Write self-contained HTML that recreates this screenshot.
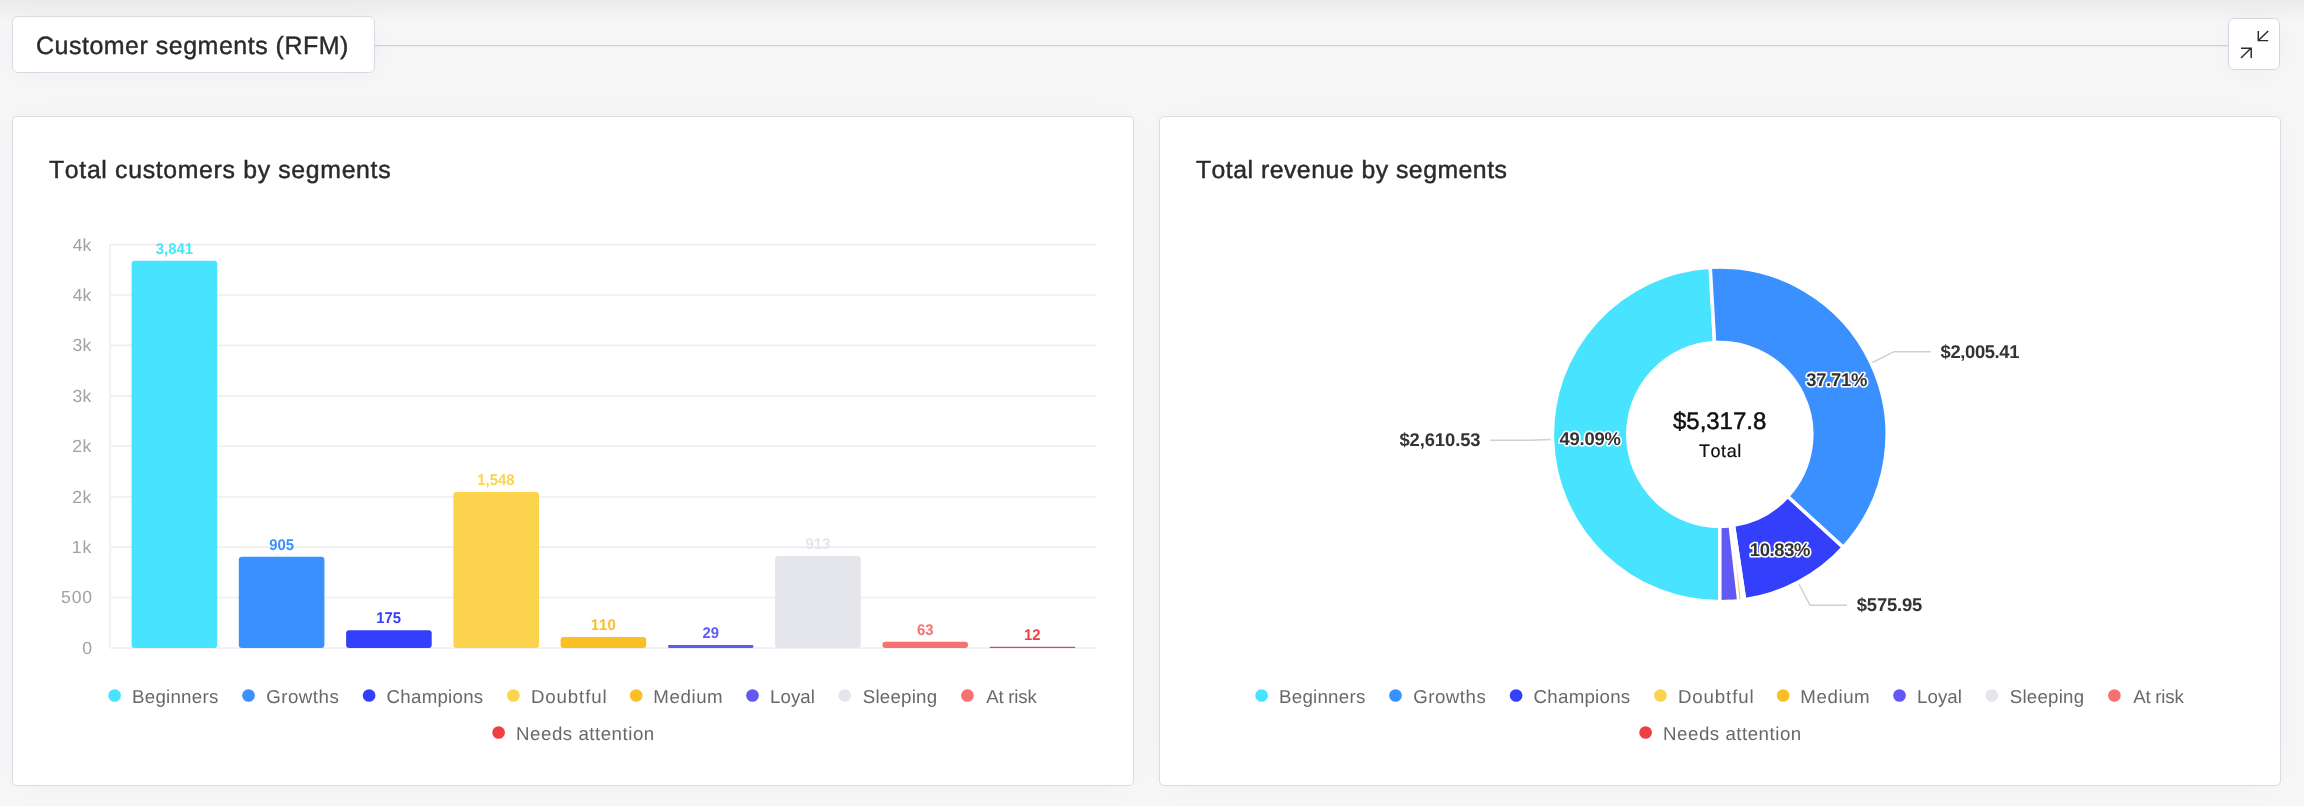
<!DOCTYPE html>
<html><head><meta charset="utf-8"><title>Customer segments (RFM)</title>
<style>
html,body{margin:0;padding:0;}
body{width:2304px;height:806px;overflow:hidden;position:relative;background:#f7f7f8;font-family:"Liberation Sans", sans-serif;}
#w{position:absolute;left:0;top:0;width:2304px;height:806px;will-change:transform;}
.topshade{position:absolute;left:0;top:0;width:2304px;height:22px;background:linear-gradient(#ebebec,#f0f0f1 45%,#f7f7f8);}
.abs{position:absolute;}
.box{position:absolute;background:#fff;border:1px solid #dadae3;border-radius:6px;box-sizing:border-box;box-shadow:0 2px 30px rgba(40,40,90,0.04);}
.card{position:absolute;background:#fff;border:1px solid #dadae3;border-radius:5px;box-sizing:border-box;box-shadow:0 0 40px rgba(40,40,90,0.03);}
svg{position:absolute;left:0;top:0;overflow:visible;}
text{font-family:"Liberation Sans", sans-serif;font-kerning:none;white-space:pre;text-rendering:geometricPrecision;}
</style></head><body>
<div class="topshade"></div>
<div id="w">
<div class="abs" style="left:375px;top:45px;width:1855px;height:1px;background:#d3d3de;"></div>
<div class="abs" style="left:375px;top:46px;width:1855px;height:1px;background:#e8e8ee;"></div>
<div class="box" style="left:12px;top:16px;width:363px;height:56.5px;"></div>
<div class="box" style="left:2228px;top:18.4px;width:52.2px;height:51.7px;border-color:#d6d6e0;"></div>
<div class="card" style="left:12px;top:116px;width:1122px;height:669.5px;"></div>
<div class="card" style="left:1159px;top:116px;width:1121.5px;height:669.5px;"></div>
<svg width="2304" height="806" viewBox="0 0 2304 806">
<g fill="none" stroke="#2a2a2a" stroke-width="1.45" stroke-linecap="butt" stroke-linejoin="miter">
<path d="M2268.2 30.9 L2258.3 40.6 M2258.3 30.9 V40.6 H2268.2"/>
<path d="M2241 57.9 L2251.1 48.1 M2241 48.2 H2251.2 V57.9"/>
</g>
<text x="36.03" y="54.20" font-size="25" font-weight="400" fill="#2a2a2a" letter-spacing="0.495" stroke="#2a2a2a" stroke-width="0.4">Customer segments (RFM)</text>
<text x="49.04" y="177.70" font-size="24.8" font-weight="400" fill="#2a2a2a" letter-spacing="0.679" stroke="#2a2a2a" stroke-width="0.45">Total customers by segments</text>
<text x="1195.94" y="177.70" font-size="24.8" font-weight="400" fill="#2a2a2a" letter-spacing="0.496" stroke="#2a2a2a" stroke-width="0.45">Total revenue by segments</text>
<circle cx="114.6" cy="695.5" r="6.35" fill="#47E3FF"/>
<text x="132.07" y="702.80" font-size="18.7" font-weight="400" fill="#686868" letter-spacing="0.251">Beginners</text>
<circle cx="248.5" cy="695.5" r="6.35" fill="#3A90FF"/>
<text x="266.16" y="702.80" font-size="18.7" font-weight="400" fill="#686868" letter-spacing="0.499">Growths</text>
<circle cx="369.1" cy="695.5" r="6.35" fill="#333FFA"/>
<text x="386.55" y="702.80" font-size="18.7" font-weight="400" fill="#686868" letter-spacing="0.267">Champions</text>
<circle cx="513.4" cy="695.5" r="6.35" fill="#FCD34D"/>
<text x="530.97" y="702.80" font-size="18.7" font-weight="400" fill="#686868" letter-spacing="0.862">Doubtful</text>
<circle cx="636.2" cy="695.5" r="6.35" fill="#FBBF24"/>
<text x="653.37" y="702.80" font-size="18.7" font-weight="400" fill="#686868" letter-spacing="0.571">Medium</text>
<circle cx="752.5" cy="695.5" r="6.35" fill="#6259F5"/>
<text x="770.07" y="702.80" font-size="18.7" font-weight="400" fill="#686868" letter-spacing="0.045">Loyal</text>
<circle cx="844.8" cy="695.5" r="6.35" fill="#E5E6EB"/>
<text x="862.75" y="702.80" font-size="18.7" font-weight="400" fill="#686868" letter-spacing="0.225">Sleeping</text>
<circle cx="967.4" cy="695.5" r="6.35" fill="#F87171"/>
<text x="986.16" y="702.80" font-size="18.7" font-weight="400" fill="#686868" letter-spacing="-0.223">At risk</text>
<circle cx="498.6" cy="732.5" r="6.35" fill="#EE4043"/>
<text x="516.07" y="739.70" font-size="18.7" font-weight="400" fill="#686868" letter-spacing="0.518">Needs attention</text>
<circle cx="1261.6" cy="695.5" r="6.35" fill="#47E3FF"/>
<text x="1279.07" y="702.80" font-size="18.7" font-weight="400" fill="#686868" letter-spacing="0.251">Beginners</text>
<circle cx="1395.5" cy="695.5" r="6.35" fill="#3A90FF"/>
<text x="1413.16" y="702.80" font-size="18.7" font-weight="400" fill="#686868" letter-spacing="0.499">Growths</text>
<circle cx="1516.1" cy="695.5" r="6.35" fill="#333FFA"/>
<text x="1533.55" y="702.80" font-size="18.7" font-weight="400" fill="#686868" letter-spacing="0.267">Champions</text>
<circle cx="1660.4" cy="695.5" r="6.35" fill="#FCD34D"/>
<text x="1677.97" y="702.80" font-size="18.7" font-weight="400" fill="#686868" letter-spacing="0.862">Doubtful</text>
<circle cx="1783.2" cy="695.5" r="6.35" fill="#FBBF24"/>
<text x="1800.37" y="702.80" font-size="18.7" font-weight="400" fill="#686868" letter-spacing="0.571">Medium</text>
<circle cx="1899.5" cy="695.5" r="6.35" fill="#6259F5"/>
<text x="1917.07" y="702.80" font-size="18.7" font-weight="400" fill="#686868" letter-spacing="0.045">Loyal</text>
<circle cx="1991.8" cy="695.5" r="6.35" fill="#E5E6EB"/>
<text x="2009.75" y="702.80" font-size="18.7" font-weight="400" fill="#686868" letter-spacing="0.225">Sleeping</text>
<circle cx="2114.4" cy="695.5" r="6.35" fill="#F87171"/>
<text x="2133.16" y="702.80" font-size="18.7" font-weight="400" fill="#686868" letter-spacing="-0.223">At risk</text>
<circle cx="1645.6" cy="732.5" r="6.35" fill="#EE4043"/>
<text x="1663.07" y="739.70" font-size="18.7" font-weight="400" fill="#686868" letter-spacing="0.518">Needs attention</text>
<line x1="110" x2="1096.5" y1="244.6" y2="244.6" stroke="#eeeef3" stroke-width="1.6"/>
<line x1="110" x2="1096.5" y1="295.0" y2="295.0" stroke="#eeeef3" stroke-width="1.6"/>
<line x1="110" x2="1096.5" y1="345.4" y2="345.4" stroke="#eeeef3" stroke-width="1.6"/>
<line x1="110" x2="1096.5" y1="395.9" y2="395.9" stroke="#eeeef3" stroke-width="1.6"/>
<line x1="110" x2="1096.5" y1="446.3" y2="446.3" stroke="#eeeef3" stroke-width="1.6"/>
<line x1="110" x2="1096.5" y1="496.7" y2="496.7" stroke="#eeeef3" stroke-width="1.6"/>
<line x1="110" x2="1096.5" y1="547.1" y2="547.1" stroke="#eeeef3" stroke-width="1.6"/>
<line x1="110" x2="1096.5" y1="597.5" y2="597.5" stroke="#eeeef3" stroke-width="1.6"/>
<line x1="110" x2="1096.5" y1="648.0" y2="648.0" stroke="#eeeef3" stroke-width="1.6"/>
<line x1="110" x2="110" y1="244.6" y2="648" stroke="#eeeef3" stroke-width="1.6"/>
<text x="72.80" y="250.55" font-size="17.6" font-weight="400" fill="#a2a2a2" letter-spacing="-0.010">4k</text>
<text x="72.80" y="300.97" font-size="17.6" font-weight="400" fill="#a2a2a2" letter-spacing="-0.010">4k</text>
<text x="72.53" y="351.39" font-size="17.6" font-weight="400" fill="#a2a2a2" letter-spacing="0.256">3k</text>
<text x="72.53" y="401.81" font-size="17.6" font-weight="400" fill="#a2a2a2" letter-spacing="0.256">3k</text>
<text x="72.31" y="452.23" font-size="17.6" font-weight="400" fill="#a2a2a2" letter-spacing="0.471">2k</text>
<text x="72.31" y="502.65" font-size="17.6" font-weight="400" fill="#a2a2a2" letter-spacing="0.471">2k</text>
<text x="71.86" y="553.07" font-size="17.6" font-weight="400" fill="#a2a2a2" letter-spacing="0.927">1k</text>
<text x="61.10" y="603.49" font-size="17.6" font-weight="400" fill="#a2a2a2" letter-spacing="0.814">500</text>
<text x="82.30" y="653.91" font-size="17.6" font-weight="400" fill="#a2a2a2">0</text>
<rect x="131.6" y="260.67" width="85.6" height="387.33" rx="3.00" fill="#47E3FF"/>
<g transform="translate(174.40 253.77) scale(0.961 1)"><text x="-19.36" y="0.00" font-size="15.5" font-weight="700" fill="#47E3FF">3,841</text></g>
<rect x="238.8" y="556.74" width="85.6" height="91.26" rx="3.00" fill="#3A90FF"/>
<g transform="translate(281.65 549.84) scale(0.961 1)"><text x="-12.98" y="0.00" font-size="15.5" font-weight="700" fill="#3A90FF">905</text></g>
<rect x="346.1" y="630.35" width="85.6" height="17.65" rx="3.00" fill="#333FFA"/>
<g transform="translate(388.90 623.45) scale(0.961 1)"><text x="-13.20" y="0.00" font-size="15.5" font-weight="700" fill="#333FFA">175</text></g>
<rect x="453.4" y="491.90" width="85.6" height="156.10" rx="3.00" fill="#FCD34D"/>
<g transform="translate(496.15 485.00) scale(0.961 1)"><text x="-19.64" y="0.00" font-size="15.5" font-weight="700" fill="#FCD34D">1,548</text></g>
<rect x="560.6" y="636.91" width="85.6" height="11.09" rx="3.00" fill="#FBBF24"/>
<g transform="translate(603.40 630.01) scale(0.961 1)"><text x="-13.10" y="0.00" font-size="15.5" font-weight="700" fill="#FBBF24">110</text></g>
<rect x="667.9" y="645.08" width="85.6" height="2.92" rx="1.46" fill="#6259F5"/>
<g transform="translate(710.65 638.18) scale(0.961 1)"><text x="-8.60" y="0.00" font-size="15.5" font-weight="700" fill="#6259F5">29</text></g>
<rect x="775.1" y="555.93" width="85.6" height="92.07" rx="3.00" fill="#E5E6EB"/>
<g transform="translate(817.90 549.03) scale(0.961 1)"><text x="-12.92" y="0.00" font-size="15.5" font-weight="700" fill="#E5E6EB">913</text></g>
<rect x="882.4" y="641.65" width="85.6" height="6.35" rx="3.00" fill="#F87171"/>
<g transform="translate(925.15 634.75) scale(0.961 1)"><text x="-8.62" y="0.00" font-size="15.5" font-weight="700" fill="#F87171">63</text></g>
<rect x="989.6" y="646.79" width="85.6" height="1.21" rx="0.61" fill="#EE4043"/>
<g transform="translate(1032.40 639.89) scale(0.961 1)"><text x="-8.80" y="0.00" font-size="15.5" font-weight="700" fill="#EE4043">12</text></g>
<path d="M1719.80 601.70 A167.3 167.3 0 0 1 1710.23 267.37 L1714.54 342.55 A92.0 92.0 0 0 0 1719.80 526.40 Z" fill="#47E3FF" stroke="#fff" stroke-width="3.5" stroke-linejoin="round"/>
<path d="M1710.23 267.37 A167.3 167.3 0 0 1 1843.19 547.38 L1787.65 496.53 A92.0 92.0 0 0 0 1714.54 342.55 Z" fill="#3A90FF" stroke="#fff" stroke-width="3.5" stroke-linejoin="round"/>
<path d="M1843.19 547.38 A167.3 167.3 0 0 1 1744.62 599.85 L1733.45 525.38 A92.0 92.0 0 0 0 1787.65 496.53 Z" fill="#333FFA" stroke="#fff" stroke-width="3.5" stroke-linejoin="round"/>
<path d="M1744.62 599.85 A167.3 167.3 0 0 1 1741.64 600.27 L1731.81 525.61 A92.0 92.0 0 0 0 1733.45 525.38 Z" fill="#FCD34D" stroke="#fff" stroke-width="3.5" stroke-linejoin="round"/>
<path d="M1741.64 600.27 A167.3 167.3 0 0 1 1738.74 600.62 L1730.21 525.81 A92.0 92.0 0 0 0 1731.81 525.61 Z" fill="#FBBF24" stroke="#fff" stroke-width="3.5" stroke-linejoin="round"/>
<path d="M1738.74 600.62 A167.3 167.3 0 0 1 1719.80 601.70 L1719.80 526.40 A92.0 92.0 0 0 0 1730.21 525.81 Z" fill="#6259F5" stroke="#fff" stroke-width="3.5" stroke-linejoin="round"/>
<polygon points="1735.3,556.5 1739.5,599.5 1740.5,599.3" fill="#FBBF24"/>
<g fill="none" stroke="#cfcfda" stroke-width="1.5">
<path d="M1551 439.4 L1530 440.2 L1490 440.3"/>
<path d="M1872.5 362.5 L1894 351.7 H1930.7"/>
<path d="M1798.9 584 L1810.1 605.3 H1847"/>
</g>
<text x="1399.46" y="446.30" font-size="18.4" font-weight="700" fill="#333" letter-spacing="-0.094">$2,610.53</text>
<text x="1940.56" y="357.80" font-size="18.4" font-weight="700" fill="#333" letter-spacing="-0.363">$2,005.41</text>
<text x="1856.76" y="611.10" font-size="18.4" font-weight="700" fill="#333" letter-spacing="-0.159">$575.95</text>
<text x="1559.52" y="445.40" font-size="18.4" font-weight="700" fill="#333" letter-spacing="-0.228" stroke="#fff" stroke-width="3.2" stroke-linejoin="round" paint-order="stroke">49.09%</text>
<text x="1806.18" y="385.60" font-size="18.4" font-weight="700" fill="#333" letter-spacing="-0.260" stroke="#fff" stroke-width="3.2" stroke-linejoin="round" paint-order="stroke">37.71%</text>
<text x="1749.84" y="556.20" font-size="18.4" font-weight="700" fill="#333" letter-spacing="-0.372" stroke="#fff" stroke-width="3.2" stroke-linejoin="round" paint-order="stroke">10.83%</text>
<text x="1673.04" y="429.00" font-size="24" font-weight="400" fill="#111" letter-spacing="-0.032" stroke="#111" stroke-width="0.5">$5,317.8</text>
<text x="1699.00" y="456.90" font-size="18" font-weight="400" fill="#111" letter-spacing="0.548" stroke="#111" stroke-width="0.2">Total</text>
</svg>
</div></body></html>
